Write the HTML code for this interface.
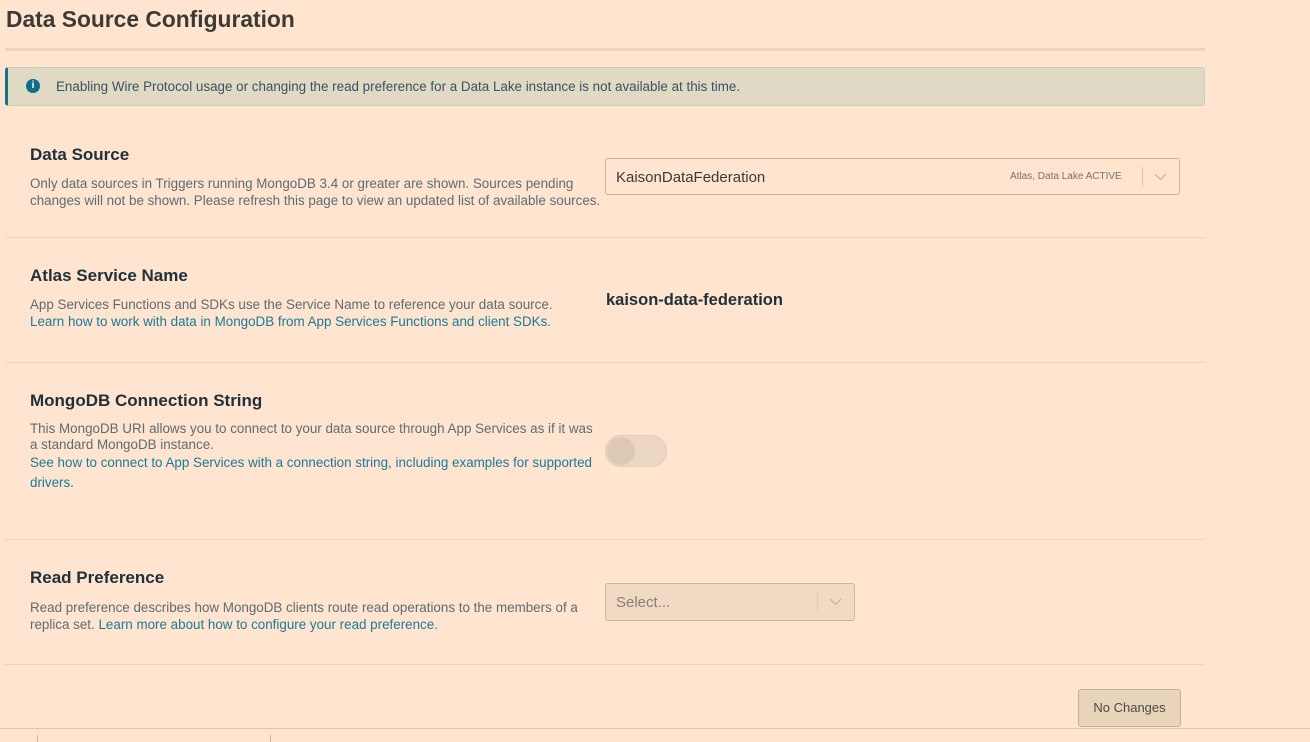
<!DOCTYPE html>
<html><head><meta charset="utf-8"><style>
*{box-sizing:border-box;margin:0;padding:0}
body{width:1310px;height:742px;background:#ffe5cf;font-family:"Liberation Sans",sans-serif;position:relative;overflow:hidden;color:#21313c}
.a{position:absolute}
h1{position:absolute;left:6px;top:6px;font-size:22.8px;font-weight:bold;color:#3d3a36}
.hr{position:absolute;left:5px;width:1200px;height:1px;background:#ecd4bf}
.h{position:absolute;left:30px;font-size:17px;font-weight:600;color:#21313c}
.d{position:absolute;left:30px;font-size:13.4px;line-height:17px;color:#5d6c74;width:575px}
.l{color:#1a7a9b}
</style></head><body>
<h1>Data Source Configuration</h1>
<div class="a" style="left:5px;top:48px;width:1200px;height:3px;background:#ecd4bf"></div>
<div class="a" style="left:5px;top:67px;width:1200px;height:39px;background:#e0d9c4;border:1px solid #c8d0c0;border-left:3px solid #1a6f8a;border-radius:3px"></div>
<div class="a" style="left:26px;top:79px;width:14px;height:14px;border-radius:50%;background:#0f6e8c;color:#fff;font-size:10px;font-weight:bold;text-align:center;line-height:14px">i</div>
<div class="a" style="left:56px;top:79px;font-size:13.4px;color:#3b5260">Enabling Wire Protocol usage or changing the read preference for a Data Lake instance is not available at this time.</div>

<div class="h" style="top:145px">Data Source</div>
<div class="d" style="top:175px">Only data sources in Triggers running MongoDB 3.4 or greater are shown. Sources pending changes will not be shown. Please refresh this page to view an updated list of available sources.</div>
<div class="a" style="left:605px;top:158px;width:575px;height:37px;border:1px solid #c7b3a0;border-radius:3px"></div>
<div class="a" style="left:616px;top:169px;font-size:15px;color:#3d3a36">KaisonDataFederation</div>
<div class="a" style="left:1010px;top:171px;font-size:10px;color:#7a7068">Atlas, Data Lake ACTIVE</div>
<div class="a" style="left:1142px;top:167px;width:1px;height:20px;background:#d8c3af"></div>
<svg class="a" style="left:1154px;top:173px" width="13" height="9"><path d="M1 1l5.5 5.5L12 1" fill="none" stroke="#c8b6a4" stroke-width="1.3"/></svg>
<div class="hr" style="top:237px"></div>

<div class="h" style="top:266px">Atlas Service Name</div>
<div class="d" style="top:296px;width:600px">App Services Functions and SDKs use the Service Name to reference your data source.<br><span class="l">Learn how to work with data in MongoDB from App Services Functions and client SDKs.</span></div>
<div class="a" style="left:606px;top:291px;font-size:16.5px;font-weight:bold;color:#21313c">kaison-data-federation</div>
<div class="hr" style="top:362px"></div>

<div class="h" style="top:391px">MongoDB Connection String</div>
<div class="d" style="top:421px;line-height:16px;width:572px">This MongoDB URI allows you to connect to your data source through App Services as if it was a standard MongoDB instance.<br><span class="l" style="line-height:20px">See how to connect to App Services with a connection string, including examples for supported drivers.</span></div>
<div class="a" style="left:605px;top:435px;width:62px;height:32px;border-radius:16px;background:#ecd7c3;border:1px solid #e2cdb9"></div>
<div class="a" style="left:607px;top:437px;width:28px;height:28px;border-radius:50%;background:#dcc8b4"></div>
<div class="hr" style="top:539px"></div>

<div class="h" style="top:568px">Read Preference</div>
<div class="d" style="top:599px;line-height:17px">Read preference describes how MongoDB clients route read operations to the members of a replica set. <span class="l">Learn more about how to configure your read preference.</span></div>
<div class="a" style="left:605px;top:583px;width:250px;height:38px;background:#f1dac4;border:1px solid #c9b5a2;border-radius:3px"></div>
<div class="a" style="left:616px;top:594px;font-size:15px;color:#8a7f76">Select...</div>
<div class="a" style="left:817px;top:592px;width:1px;height:20px;background:#e0cbb7"></div>
<svg class="a" style="left:829px;top:598px" width="13" height="9"><path d="M1 1l5.5 5.5L12 1" fill="none" stroke="#c8b6a4" stroke-width="1.3"/></svg>
<div class="hr" style="top:664px"></div>

<div class="a" style="left:1078px;top:689px;width:103px;height:38px;background:#e7d4b9;border:1px solid #bfae99;border-radius:3px;font-size:13px;color:#4d4a46;text-align:center;line-height:36px">No Changes</div>
<div class="a" style="left:0;top:728px;width:1310px;height:1px;background:#dcc6b2"></div>
<div class="a" style="left:37px;top:735px;width:1px;height:7px;background:#c9b5a2"></div>
<div class="a" style="left:270px;top:735px;width:1px;height:7px;background:#c9b5a2"></div>
</body></html>
